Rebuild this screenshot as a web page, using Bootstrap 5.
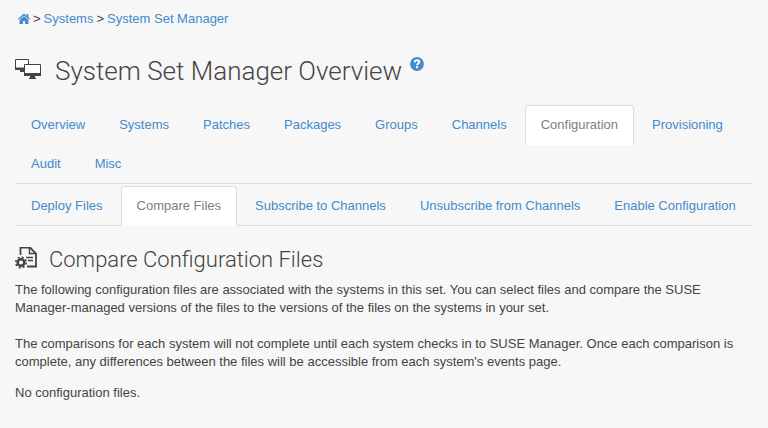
<!DOCTYPE html>
<html lang="en">
<head>
<meta charset="utf-8">
<meta name="viewport" content="width=device-width, initial-scale=1">
<title>System Set Manager</title>
<link href="https://cdn.jsdelivr.net/npm/bootstrap@5.3.0/dist/css/bootstrap.min.css" rel="stylesheet">
<style>
body { background: #f7f7f7; color: #444; font-family: "Liberation Sans", Arial, sans-serif; font-size: 13px; line-height: 18px; }
a { color: #428bca; }
.page { padding: 10px 15px 15px; }
.trail { padding-left: 3px; column-gap: 3px; }
h1, h2 { font-family: Roboto, sans-serif; font-weight: 300; }
h1 { font-size: 26px; line-height: 30px; margin: 28px 0 19px; column-gap: 14px; }
h2 { font-size: 22px; line-height: 26px; margin: 21px 0 8px; column-gap: 12px; }
.help { margin-left: -6px; }
.nav-tabs { --bs-nav-tabs-border-color: #ddd; --bs-nav-tabs-border-radius: 4px; --bs-nav-link-color: #428bca; --bs-nav-tabs-link-active-color: #808080; --bs-nav-tabs-link-active-bg: #fff; --bs-nav-tabs-link-active-border-color: #ddd #ddd transparent; --bs-nav-link-padding-x: 15px; --bs-nav-link-padding-y: 10px; column-gap: 2px; }
.nav-tabs .nav-item { margin-bottom: -1px; }
.nav-tabs .nav-link { margin-bottom: 0; }
.main-tabs { margin-bottom: 2px; }
svg { display: block; }
.intro { margin-bottom: 13px; }
.intro p { margin-bottom: 18px; }
</style>
<script src="https://cdn.jsdelivr.net/npm/bootstrap@5.3.0/dist/js/bootstrap.bundle.min.js"></script>
</head>
<body>
<main class="page container-fluid">
  <nav class="trail d-flex align-items-center" aria-label="Breadcrumb">
    <a href="#" aria-label="Home"><svg width="12" height="12" viewBox="0 0 12 12" fill="#428bca"><path d="M6 .6 0 5.700l.8 1.100L6 2.600l5.200 4.200.8-1.100-1.600-1.400V1H8.600V2.800zM6 3.300 1.600 6.900V11H4.900V8H7.100V11H10.400V6.900z"/></svg></a>
    <span>&gt;</span>
    <a class="text-decoration-none" href="#">Systems</a>
    <span>&gt;</span>
    <a class="text-decoration-none" href="#">System Set Manager</a>
  </nav>

  <h1 class="d-flex align-items-center">
    <svg width="26" height="24" viewBox="0 0 26 24" aria-hidden="true"><path d="M.5.500h13v10H.5z" fill="#fff" stroke="#444"/><path d="M0 8.500H9V11H0zM5 11H9V13H5z" fill="#444"/><path d="M9.500 5.500h16v11h-16z" fill="#fff" stroke="#444"/><path d="M9 14H26V17H9zM15 17H20V18.500L21 19V20H14V19L15 18.500z" fill="#444"/></svg>
    <span>System Set Manager Overview</span>
    <a class="help align-self-start" href="#" aria-label="Help"><svg width="14" height="16" viewBox="0 0 14 16"><circle cx="7" cy="8" r="6.900" fill="#428bca"/><path d="M4.700 6.300C4.900 4.800 5.700 4.300 7 4.300c1.400 0 2.300.7 2.300 1.800C9.300 7.500 7.100 7.500 7.100 9.300" fill="none" stroke="#fff" stroke-width="2"/><rect x="6" y="10.200" width="2.200" height="2" fill="#fff"/></svg></a>
  </h1>

  <ul class="nav nav-tabs main-tabs">
    <li class="nav-item"><a class="nav-link" href="#">Overview</a></li>
    <li class="nav-item"><a class="nav-link" href="#">Systems</a></li>
    <li class="nav-item"><a class="nav-link" href="#">Patches</a></li>
    <li class="nav-item"><a class="nav-link" href="#">Packages</a></li>
    <li class="nav-item"><a class="nav-link" href="#">Groups</a></li>
    <li class="nav-item"><a class="nav-link" href="#">Channels</a></li>
    <li class="nav-item"><a class="nav-link active" aria-current="page" href="#">Configuration</a></li>
    <li class="nav-item"><a class="nav-link" href="#">Provisioning</a></li>
    <li class="nav-item"><a class="nav-link" href="#">Audit</a></li>
    <li class="nav-item"><a class="nav-link" href="#">Misc</a></li>
  </ul>
  <ul class="nav nav-tabs">
    <li class="nav-item"><a class="nav-link" href="#">Deploy Files</a></li>
    <li class="nav-item"><a class="nav-link active" aria-current="page" href="#">Compare Files</a></li>
    <li class="nav-item"><a class="nav-link" href="#">Subscribe to Channels</a></li>
    <li class="nav-item"><a class="nav-link" href="#">Unsubscribe from Channels</a></li>
    <li class="nav-item"><a class="nav-link" href="#">Enable Configuration</a></li>
  </ul>

  <h2 class="d-flex align-items-center">
    <svg width="22" height="26" viewBox="0 1 22 26" fill="none" stroke="#444" aria-hidden="true"><path d="M5.500 9V1.500H15L21 7.500V20.500H12" stroke-width="1.800"/><path d="M14.500 1.500V7.500H21M11 11.500H18M13 14.500H18" stroke-width="1.500"/><circle cx="6" cy="16.500" r="3.300" stroke-width="2.400"/><circle cx="6" cy="16.500" r="5.200" stroke-width="1.600" stroke-dasharray="2.100 1.980"/></svg>
    <span>Compare Configuration Files</span>
  </h2>
  <div class="intro">
    <p>The following configuration files are associated with the systems in this set. You can select files and compare the SUSE Manager-managed versions of the files to the versions of the files on the systems in your set.</p>
    <p class="mb-0">The comparisons for each system will not complete until each system checks in to SUSE Manager. Once each comparison is complete, any differences between the files will be accessible from each system's events page.</p>
  </div>
  <p class="mb-0">No configuration files.</p>
</main>
</body>
</html>
